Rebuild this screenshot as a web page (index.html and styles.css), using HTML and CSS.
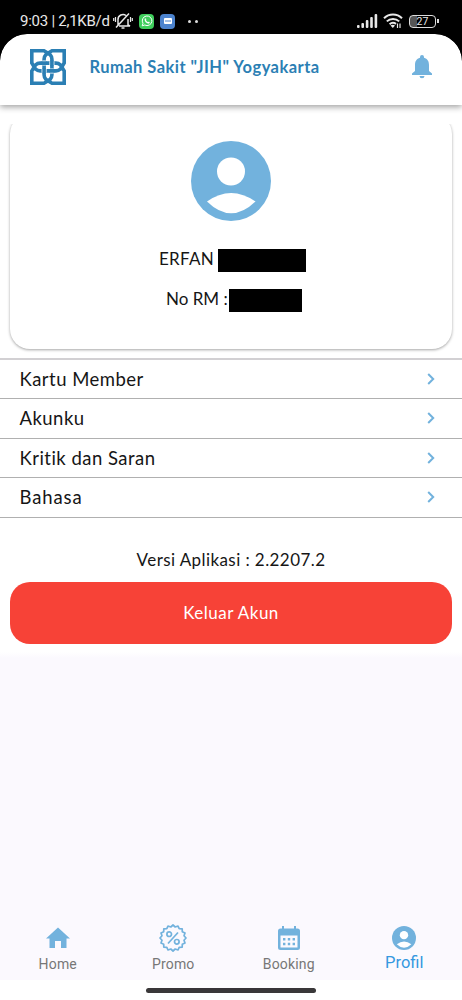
FILE: index.html
```html
<!DOCTYPE html>
<html lang="id">
<head>
<meta charset="utf-8">
<meta name="viewport" content="width=device-width">
<title>Profil</title>
<link rel="stylesheet" href="styles.css">
</head>
<body>
<div class="app">
  <div class="status">
    <span class="clock">9:03 | 2,1KB/d</span>
    <svg class="mute" width="20" height="18" viewBox="0 0 20 18" fill="none" stroke="#e8e8e8" stroke-width="1.5"><path d="M5 13V7.500a5 5 0 0 1 8-4M15 7v6l2 1H6M8.500 16h3M3 15.500 16 1.500"/><path d="M2.500 5v5M.7 6v3M17.500 5v5M19.300 6v3" stroke-width="1.200"/></svg>
    <span class="chip chip-green"><svg width="12" height="12" viewBox="0 0 12 12" fill="none" stroke="#fff"><path d="M1.200 10.800 2 8.300A4.800 4.800 0 1 1 3.800 10z"/><path d="M4.200 3.800c0 2.200 1.700 4 4 4.200M4.200 3.600l.8 1M8.400 8l-1-1" stroke-width="1.300"/></svg></span>
    <span class="chip chip-blue"><svg width="8" height="6" viewBox="0 0 8 6"><rect width="8" height="6" rx="1" fill="#fff"/><path d="M1 3h6" stroke="#4c83ce"/></svg></span>
    <span class="dots"><i></i><i></i></span>
    <svg class="signal" width="21" height="14" viewBox="0 0 21 14" fill="#e8e8e8"><rect y="11" width="2.600" height="3" rx="1"/><rect x="4.400" y="9" width="2.600" height="5" rx="1"/><rect x="8.800" y="6" width="2.600" height="8" rx="1"/><rect x="13.200" y="3" width="2.600" height="11" rx="1"/><rect x="17.600" width="2.600" height="14" rx="1"/></svg>
    <svg class="wifi" width="20" height="16" viewBox="0 0 20 16" fill="none" stroke="#e8e8e8" stroke-width="2"><path d="M1 5.200a13 13 0 0 1 18 0M3.800 8.400a9 9 0 0 1 12.400 0M6.600 11.300a5 5 0 0 1 6.400-.4"/><path d="m7.500 12.500 2.300 2.500 2.200-2.500q-2.200-1.500-4.500 0" fill="#e8e8e8" stroke="none"/><path d="M14.500 10.500V15M17 10.500V15" stroke-width="1.200"/></svg>
    <span class="battery">27</span>
  </div>
  <header class="header">
    <svg class="logo" width="36" height="36" viewBox="0 0 36 36" fill="none" stroke="#2b7fb4" stroke-width="3.600"><path d="M1.800 1.800H14L20 5.500Q21.900 7.500 21.900 10V26Q21.900 28.500 20 30.500L14 34.200H1.800V22L5.500 16Q7.500 14.100 10 14.100H26Q28.500 14.100 30.500 16L34.200 22V34.200H22L16 30.500Q14.100 28.500 14.100 26V10Q14.100 7.500 16 5.500L22 1.800H34.200V14L30.500 20Q28.500 21.900 26 21.900H10Q7.500 21.900 5.500 20L1.800 14Z"/><path d="M21.900 12.300v3.600M14.100 20.100v3.600M12.300 14.100h3.600M20.100 21.900h3.600" stroke="#fff" stroke-width="5"/><path d="M21.900 11.500v5M14.100 19.500v5M11.500 14.100h5M19.500 21.900h5"/></svg>
    <h1 class="title">Rumah Sakit "JIH" Yogyakarta</h1>
    <svg class="bell" width="20" height="24" viewBox="0 0 20 24" fill="#72b2dd"><path d="M10 0a2 2 0 0 1 2 2v.8c3.500.9 5 3.700 5 7.200v6l3 2.500V20H0v-1.500L3 16v-6c0-3.500 1.500-6.300 5-7.200V2a2 2 0 0 1 2-2M7.500 21h5a2.500 2.300 0 0 1-5 0"/></svg>
  </header>
  <main class="content">
    <section class="card">
      <svg class="avatar" width="80" height="80" viewBox="0 0 80 80"><circle cx="40" cy="40" r="40" fill="#72b2dd"/><circle cx="40" cy="30.500" r="14" fill="#fff"/><path d="M16 60.500Q40 43.500 64.500 60.500Q40 84 16 60.500" fill="#fff"/></svg>
      <p class="field name"><span class="label">ERFAN</span><span class="mask mask-name"></span></p>
      <p class="field record"><span class="label">No RM :</span><span class="mask mask-record"></span></p>
    </section>
    <nav class="menu">
      <a class="row"><span>Kartu Member</span><svg width="8" height="12" viewBox="0 0 8 12"><path d="m1.200 1 5 5-5 5"/></svg></a>
      <a class="row"><span>Akunku</span><svg width="8" height="12" viewBox="0 0 8 12"><path d="m1.200 1 5 5-5 5"/></svg></a>
      <a class="row"><span>Kritik dan Saran</span><svg width="8" height="12" viewBox="0 0 8 12"><path d="m1.200 1 5 5-5 5"/></svg></a>
      <a class="row"><span class="spaced">Bahasa</span><svg width="8" height="12" viewBox="0 0 8 12"><path d="m1.200 1 5 5-5 5"/></svg></a>
    </nav>
    <p class="version">Versi Aplikasi : 2.2207.2</p>
    <button class="logout">Keluar Akun</button>
  </main>
  <nav class="tabs">
    <a class="tab"><svg width="24" height="21" viewBox="0 0 24 21" fill="#72b2dd"><path d="M12 0 24 11h-3.500v9.500H15v-7H9v7H3.500V11H0z"/></svg><span>Home</span></a>
    <a class="tab"><svg width="28" height="28" viewBox="-14 -14 28 28" fill="none" stroke="#72b2dd" stroke-width="1.700" stroke-linejoin="round"><path d="M13 0 11 2.200 12 5 9.300 6.200 9.200 9.200 6.200 9.300 5 12 2.200 11 0 13-2.200 11-5 12-6.200 9.300-9.200 9.200-9.300 6.200-12 5-11 2.200-13 0-11-2.200-12-5-9.300-6.200-9.200-9.200-6.200-9.300-5-12-2.200-11 0-13 2.200-11 5-12 6.200-9.300 9.200-9.200 9.300-6.200 12-5 11-2.200Z"/><circle cx="-3.800" cy="-3.800" r="2.300"/><circle cx="3.800" cy="3.800" r="2.300"/><path d="M5-5.500-5 5.500"/></svg><span>Promo</span></a>
    <a class="tab"><svg width="22" height="24" viewBox="0 0 22 24"><path d="M4 0h2v2.500h10V0h2v2.500h1.500A2.500 2.500 0 0 1 22 5v16.500a2.500 2.500 0 0 1-2.500 2.500h-17A2.500 2.500 0 0 1 0 21.500V5a2.500 2.500 0 0 1 2.500-2.500H4z" fill="#72b2dd"/><path d="M2.500 9.500h17v12h-17z" fill="#fbf9fe"/><path d="M5 13.200h12M5 18h12" stroke="#72b2dd" stroke-width="2.400" stroke-dasharray="2.400"/></svg><span>Booking</span></a>
    <a class="tab active"><svg width="24" height="24" viewBox="0 0 80 80"><circle cx="40" cy="40" r="40" fill="#72b2dd"/><circle cx="40" cy="30.500" r="14" fill="#fff"/><path d="M16 60.500Q40 43.500 64.500 60.500Q40 84 16 60.500" fill="#fff"/></svg><span>Profil</span></a>
  </nav>
  <div class="gesture"><span></span></div>
</div>
</body>
</html>
```
FILE: styles.css
```css
* { box-sizing: border-box; }
body { margin: 0; background: #000; font-family: Lato, "Open Sans", sans-serif; color: #161616; }
p, h1 { margin: 0; }
.app { width: 462px; height: 1000px; display: flex; flex-direction: column; overflow: hidden; }

.status { height: 34px; flex: none; display: flex; align-items: center; padding: 8px 23px 0 20px; font-family: Roboto, sans-serif; color: #e8e8e8; }
.clock { width: 93px; font-size: 15px; letter-spacing: -.25px; white-space: nowrap; }
.mute { flex: none; }
.chip { width: 15px; height: 15px; margin-left: 6px; border-radius: 4px; display: flex; align-items: center; justify-content: center; }
.chip-green { background: #3fce5c; }
.chip-blue { background: #4c83ce; margin-left: 6px; }
.dots { display: flex; gap: 4px; margin-left: 13px; }
.dots i { width: 3px; height: 3px; border-radius: 50%; background: #ddd; }
.signal { margin-left: auto; }
.wifi { margin-left: 5px; }
.battery { position: relative; width: 27px; height: 13px; margin: 0 3px 0 6px; border: 1.5px solid #ddd; border-radius: 4px; background: linear-gradient(90deg, #555 27%, #000 27%); font-size: 10.5px; line-height: 11px; text-align: center; }
.battery::after { content: ""; position: absolute; right: -4px; top: 3px; width: 2px; height: 4px; background: #ddd; }

.header { position: relative; z-index: 1; height: 71px; flex: none; display: flex; align-items: center; padding: 0 30px 5px; border-radius: 27px 27px 0 0; background: #fff; box-shadow: 0 2px 6px rgba(0, 0, 0, .38); clip-path: inset(0 0 -12px 0 round 27px 27px 0 0); }
.title { margin-left: 23.5px; font-size: 16.500px; font-weight: 700; color: #2b7fb4; white-space: nowrap; letter-spacing: .46px; }
.bell { margin-left: auto; }

.content { height: 547px; flex: none; padding-top: .1px; background: #fff; }
.card { height: 235px; margin: 9px 10px 9px; border-radius: 20px; box-shadow: 0 1px 3px rgba(0, 0, 0, .36); background: #fff; display: flex; flex-direction: column; align-items: center; padding-top: 27px; clip-path: inset(10px -5px -5px -5px); }
.avatar { flex: none; }
.field { display: flex; align-items: center; height: 23px; font-size: 17px; width: 100%; }
.label { padding-bottom: 4px; }
.name { margin-top: 28px; padding-left: 149px; letter-spacing: .3px; }
.record { margin-top: 17px; padding-left: 156px; }
.mask { height: 23px; background: #000; }
.mask-name { width: 88px; margin-left: 4px; }
.mask-record { width: 73px; margin-left: 1px; }

.menu { border-top: 2px solid #d2d0d3; }
.row { height: 39.400px; display: flex; justify-content: space-between; align-items: center; padding: 0 27px 1px 19.500px; border-bottom: 1px solid #b0b0b0; font-size: 18.500px; letter-spacing: .47px; }
.spaced { letter-spacing: .9px; }
.row svg { fill: none; stroke: #72b2dd; stroke-width: 2; }
.version { height: 23px; margin-top: 30px; text-align: center; font-size: 17px; line-height: 23px; letter-spacing: .42px; }
.logout { display: block; width: 442px; height: 62px; margin: 11px auto 0; padding: 0 0 1px; border: 0; border-radius: 20px; background: #f74237; color: #fff; font: 17px Lato, sans-serif; letter-spacing: .5px; }

.tabs { flex: 1; display: flex; align-items: flex-end; background: linear-gradient(#fff, #fbf9fe 6px); font-family: Roboto, sans-serif; font-size: 14px; color: #777; }
.tab { flex: 1; height: 56px; display: flex; flex-direction: column; align-items: center; justify-content: space-between; padding-bottom: 8px; line-height: 16px; letter-spacing: .15px; }
.tab svg { height: 28px; }
.active { color: #3598e0; font-size: 16.500px; line-height: 18px; letter-spacing: 0; }
.gesture { height: 20px; flex: none; background: #fff; display: flex; justify-content: center; align-items: flex-start; padding-top: 8px; }
.gesture span { width: 170px; height: 5px; border-radius: 3px; background: #3a3839; }
```
